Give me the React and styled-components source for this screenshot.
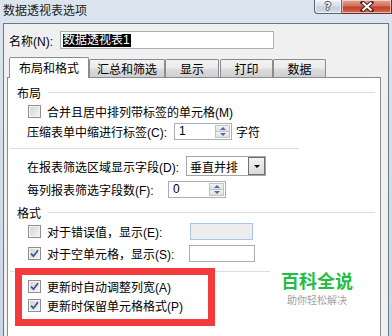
import React from "react";
import styled, { createGlobalStyle } from "styled-components";

const Global = createGlobalStyle`
  html, body { margin: 0; padding: 0; }
  body {
    font-family: "Liberation Sans", "Noto Sans CJK SC", sans-serif;
    font-size: 12px;
    color: #000;
  }
`;

const Window = styled.div`
  width: 392px;
  height: 336px;
  box-sizing: border-box;
  overflow: hidden;
  background: linear-gradient(#dce5ef, #c9d6e5);
  padding: 0 3px;
  display: flex;
  flex-direction: column;
`;

const TitleBar = styled.div`
  height: 23px;
  flex-shrink: 0;
  display: flex;
  align-items: flex-start;
  justify-content: space-between;
`;

const Title = styled.div`
  font-size: 12px;
  line-height: 20px;
  color: #1c1c1c;
  margin-top: 1px;
`;

const Controls = styled.div`
  display: flex;
  margin-right: -3px;
`;

const CaptionButton = styled.div`
  height: 14px;
  box-sizing: border-box;
  display: flex;
  align-items: center;
  justify-content: center;
  border: 1px solid ${(p) => (p.$close ? "#6a3027" : "#5a6676")};
  border-top: none;
  width: ${(p) => p.$w}px;
  border-radius: ${(p) => (p.$close ? "0" : "0 0 0 4px")};
  border-left: ${(p) => (p.$close ? "none" : undefined)};
  background: ${(p) =>
    p.$close
      ? "linear-gradient(#e6a595, #d0705f 45%, #c4402c 55%, #d46a52)"
      : "linear-gradient(#edf1f6, #d7dfe9 45%, #c6d1de 55%, #d3dce7)"};
  box-shadow: inset 0 0 0 1px rgba(255, 255, 255, 0.55);
`;

const HelpGlyph = styled.span`
  font-family: "DejaVu Sans", sans-serif;
  font-weight: bold;
  font-size: 11px;
  line-height: 11px;
  color: #fff;
  text-shadow: -1px 0 #46505c, 1px 0 #46505c, 0 -1px #46505c, 0 1px #46505c;
`;

const Client = styled.div`
  flex: 1;
  min-height: 0;
  background: #f0f0f0;
  border: 1px solid #6b7889;
  border-bottom: none;
  display: flex;
  flex-direction: column;
`;

const NameRow = styled.div`
  display: flex;
  align-items: center;
  height: 18px;
  margin-top: 7px;
  padding-left: 5px;
`;

const NameLabel = styled.span`
  width: 51px;
  flex-shrink: 0;
  white-space: nowrap;
`;

const NameInput = styled.div`
  width: 214px;
  height: 18px;
  box-sizing: border-box;
  border: 1px solid #abadb3;
  background: #fff;
  padding-left: 2px;
  display: flex;
  align-items: center;
`;

const Selected = styled.span`
  background: #000;
  color: #fff;
  line-height: 13px;
  padding-right: 1px;
`;

const TabRow = styled.div`
  display: flex;
  align-items: flex-end;
  height: 21px;
  margin-top: 8px;
  margin-bottom: -1px;
  padding-left: 5px;
  position: relative;
  z-index: 1;
`;

const Tab = styled.div`
  box-sizing: border-box;
  width: ${(p) => p.$w}px;
  margin-left: ${(p) => p.$gap || 0}px;
  height: ${(p) => (p.$active ? 21 : 18)}px;
  margin-bottom: ${(p) => (p.$active ? 0 : 1)}px;
  border: 1px solid #898c95;
  border-bottom: none;
  border-radius: 2px 2px 0 0;
  background: ${(p) =>
    p.$active
      ? "#fff"
      : "linear-gradient(#f3f3f3, #ebebeb 48%, #dddddd 52%, #cfcfcf)"};
  display: flex;
  align-items: center;
  justify-content: center;
  padding-bottom: ${(p) => (p.$active ? 2 : 0)}px;
  white-space: nowrap;
`;

const Panel = styled.div`
  position: relative;
  flex: 1;
  margin-left: 3px;
  width: 374px;
  box-sizing: border-box;
  border: 1px solid #898c95;
  border-bottom: none;
  background: #fff;
  display: flex;
  flex-direction: column;
`;

const Heading = styled.div`
  display: flex;
  align-items: center;
  height: 16px;
  margin-top: ${(p) => p.$mt}px;
  padding-left: 9px;
  padding-right: 5px;
`;

const HeadingLine = styled.div`
  flex: 1;
  height: 1px;
  margin-left: 7px;
  background: #d5dfe5;
`;

const Row = styled.div`
  display: flex;
  align-items: center;
  height: ${(p) => p.$h || 20}px;
  margin-top: ${(p) => p.$mt || 0}px;
  padding-left: ${(p) => p.$indent}px;
  white-space: nowrap;
`;

const Label = styled.span`
  width: ${(p) => (p.$w ? `${p.$w}px` : "auto")};
  flex-shrink: 0;
`;

const Box = styled.div`
  width: 13px;
  height: 13px;
  box-sizing: border-box;
  flex-shrink: 0;
  margin-right: 6px;
  border: 1px solid #8e8f8f;
  background: linear-gradient(135deg, #d2d2d2, #f6f6f6);
  box-shadow: inset 0 0 0 1px #f4f4f4;
  display: flex;
  align-items: center;
  justify-content: center;
`;

const Divider = styled.div`
  height: 1px;
  background: #d5dfe5;
  margin-top: ${(p) => p.$mt}px;
  margin-left: 2px;
  width: ${(p) => p.$w}px;
`;

const TextBox = styled.div`
  width: ${(p) => p.$w}px;
  height: 17px;
  box-sizing: border-box;
  border: 1px solid ${(p) => (p.$disabled ? "#aac6e6" : "#abadb3")};
  background: ${(p) => (p.$disabled ? "#ededed" : "#fff")};
  display: flex;
  align-items: stretch;
`;

const Value = styled.span`
  flex: 1;
  padding-left: 4px;
  line-height: 15px;
`;

const Spin = styled.div`
  width: 15px;
  display: flex;
  flex-direction: column;
  margin: 1px 1px 1px 0;
`;

const SpinHalf = styled.div`
  flex: 1;
  display: flex;
  align-items: center;
  justify-content: center;
  background: linear-gradient(#f4f4f4, #dedede);
  border: 1px solid #c3c3c3;
  & + & {
    border-top: none;
  }
`;

const Arrow = styled.div`
  width: 0;
  height: 0;
  border-left: ${(p) => p.$s}px solid transparent;
  border-right: ${(p) => p.$s}px solid transparent;
  ${(p) =>
    p.$up
      ? `border-bottom: ${p.$s}px solid ${p.$c};`
      : `border-top: ${p.$s}px solid ${p.$c};`}
`;

const After = styled.span`
  margin-left: 4px;
`;

const Select = styled.div`
  width: 80px;
  height: 20px;
  box-sizing: border-box;
  border: 1px solid #a5a5a5;
  background: #fff;
  display: flex;
  align-items: center;
`;

const SelectText = styled.span`
  flex: 1;
  padding-left: 3px;
`;

const SelectButton = styled.div`
  width: 17px;
  height: 18px;
  box-sizing: border-box;
  border: 1px solid #6f6f6f;
  background: linear-gradient(#f2f2f2, #dadada);
  display: flex;
  align-items: center;
  justify-content: center;
`;

const Highlighted = styled.div`
  position: relative;
  margin-top: 5px;
`;

const RedFrame = styled.div`
  position: absolute;
  top: -9px;
  left: 7px;
  width: 200px;
  height: 58px;
  box-sizing: border-box;
  border: 7px solid #f33b3b;
  pointer-events: none;
`;

const Watermark = styled.div`
  position: absolute;
  left: 272px;
  top: 195px;
  width: 74px;
  display: flex;
  flex-direction: column;
  align-items: center;
`;

const MarkTitle = styled.div`
  color: #1fbe45;
  font-size: 18px;
  font-weight: 700;
  line-height: 19px;
`;

const MarkSub = styled.div`
  color: #a0a0a0;
  font-size: 10px;
  line-height: 11px;
  margin-top: 3px;
`;

const Check = ({ checked }) => (
  <Box>
    {checked && (
      <svg width="9" height="9" viewBox="0 0 9 9">
        <path d="M1 4.6 L3.4 7.2 L8 1.2" fill="none" stroke="#3d5290" strokeWidth="1.7" />
      </svg>
    )}
  </Box>
);

const SpinBox = ({ w, value }) => (
  <TextBox $w={w}>
    <Value>{value}</Value>
    <Spin>
      <SpinHalf>
        <Arrow $up $s={3} $c="#4a6bb5" />
      </SpinHalf>
      <SpinHalf>
        <Arrow $s={3} $c="#4a6bb5" />
      </SpinHalf>
    </Spin>
  </TextBox>
);

export default function App() {
  return (
    <>
      <Global />
      <Window>
        <TitleBar>
          <Title>数据透视表选项</Title>
          <Controls>
            <CaptionButton $w={28}>
              <HelpGlyph>?</HelpGlyph>
            </CaptionButton>
            <CaptionButton $close $w={50}>
              <svg width="14" height="11" viewBox="0 0 14 11">
                <path d="M2.5 1.5 L11.5 9.5 M11.5 1.5 L2.5 9.5" stroke="#4a2620" strokeWidth="4" strokeLinecap="square" />
                <path d="M2.5 1.5 L11.5 9.5 M11.5 1.5 L2.5 9.5" stroke="#fff" strokeWidth="2" />
              </svg>
            </CaptionButton>
          </Controls>
        </TitleBar>
        <Client>
          <NameRow>
            <NameLabel>名称(N):</NameLabel>
            <NameInput>
              <Selected>数据透视表1</Selected>
            </NameInput>
          </NameRow>
          <TabRow>
            <Tab $active $w={80}>布局和格式</Tab>
            <Tab $w={76}>汇总和筛选</Tab>
            <Tab $w={54}>显示</Tab>
            <Tab $w={53} $gap={1}>打印</Tab>
            <Tab $w={53}>数据</Tab>
          </TabRow>
          <Panel>
            <Heading $mt={6}>
              布局
              <HeadingLine />
            </Heading>
            <Row $mt={1} $indent={20}>
              <Check />
              <Label>合并且居中排列带标签的单元格(M)</Label>
            </Row>
            <Row $indent={19}>
              <Label $w={147}>压缩表单中缩进行标签(C):</Label>
              <SpinBox w={58} value="1" />
              <After>字符</After>
            </Row>
            <Divider $mt={7} $w={289} />
            <Row $mt={6} $h={22} $indent={19}>
              <Label $w={159}>在报表筛选区域显示字段(D):</Label>
              <Select>
                <SelectText>垂直并排</SelectText>
                <SelectButton>
                  <Arrow $s={3.5} $c="#000" />
                </SelectButton>
              </Select>
            </Row>
            <Row $mt={2} $indent={19}>
              <Label $w={141}>每列报表筛选字段数(F):</Label>
              <SpinBox w={58} value="0" />
            </Row>
            <Heading $mt={5}>
              格式
              <HeadingLine />
            </Heading>
            <Row $mt={1} $indent={20}>
              <Check />
              <Label $w={143}>对于错误值，显示(E):</Label>
              <TextBox $w={63} $disabled />
            </Row>
            <Row $mt={2} $indent={20}>
              <Check checked />
              <Label $w={142}>对于空单元格，显示(S):</Label>
              <TextBox $w={66} />
            </Row>
            <Divider $mt={8} $w={260} />
            <Highlighted>
              <Row $h={19} $indent={20}>
                <Check checked />
                <Label>更新时自动调整列宽(A)</Label>
              </Row>
              <Row $h={19} $indent={20}>
                <Check checked />
                <Label>更新时保留单元格格式(P)</Label>
              </Row>
              <RedFrame />
            </Highlighted>
            <Watermark>
              <MarkTitle>百科全说</MarkTitle>
              <MarkSub>助你轻松解决</MarkSub>
            </Watermark>
          </Panel>
        </Client>
      </Window>
    </>
  );
}
